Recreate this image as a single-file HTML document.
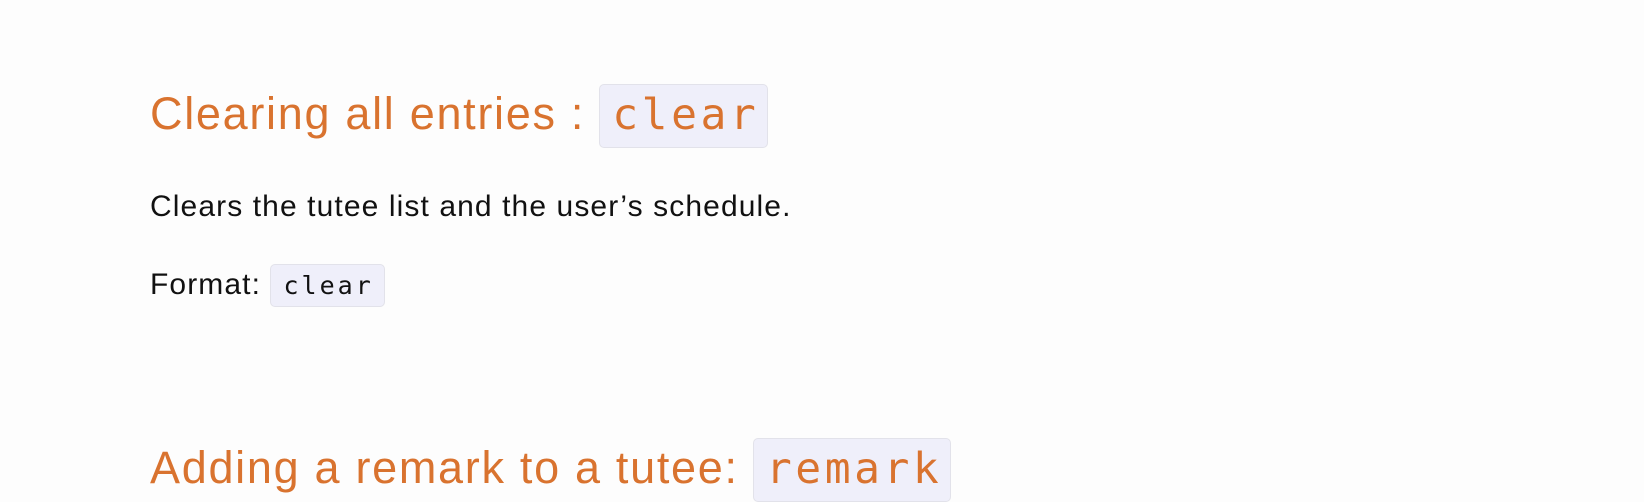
<!DOCTYPE html>
<html><head><style>
html,body{margin:0;padding:0;background:#fdfdfd;width:1644px;height:468px;overflow:hidden;font-family:"Liberation Sans",sans-serif;}
.h{position:absolute;left:150px;color:#d9732f;font-size:45px;white-space:nowrap;line-height:1;letter-spacing:1.7px;}
.hc{display:inline-block;font-family:"DejaVu Sans Mono","Liberation Mono",monospace;font-size:43px;background:#efeffa;border:1px solid #e2e2ea;border-radius:5px;padding:9px 8px 10px 12px;vertical-align:baseline;letter-spacing:3.5px;}
.p{position:absolute;left:150px;font-size:30px;color:#111;white-space:nowrap;letter-spacing:1.1px;}
.c{display:inline-block;font-family:"DejaVu Sans Mono","Liberation Mono",monospace;font-size:25px;background:#efeffa;border:1px solid #e2e2ea;border-radius:5px;padding:6px 10px 6px 12px;letter-spacing:3px;}
</style></head><body>
<div class="h" style="top:84px;"><span>Clearing all entries :</span> <span class="hc">clear</span></div>
<div class="p" style="top:190px;">Clears the tutee list and the user’s schedule.</div>
<div class="p" style="top:264px;">Format: <span class="c">clear</span></div>
<div class="h" style="top:438px;"><span>Adding a remark to a tutee:</span> <span class="hc">remark</span></div>
</body></html>
